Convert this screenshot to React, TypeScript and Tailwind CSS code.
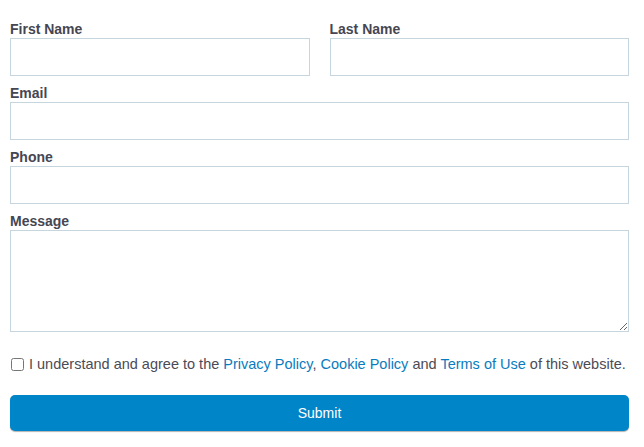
import React from "react";

const labelCls = "block text-[14px] leading-[16px] font-bold text-[#464652] mb-[1px]";
const inputCls = "block w-full h-[38px] border border-[#c5d6de] bg-white outline-none px-2";

export default function App() {
  return (
    <div className="w-[644px] h-[447px] bg-white pl-[10px] pr-[15px] pt-[21px] font-['Liberation_Sans',Arial,sans-serif]">
      <form className="flex flex-col">
        <div className="grid grid-cols-2 gap-x-[20px]">
          <div>
            <label className={labelCls}>First Name</label>
            <input className={inputCls} />
          </div>
          <div>
            <label className={labelCls}>Last Name</label>
            <input className={inputCls} />
          </div>
        </div>
        <div className="mt-[9px]">
          <label className={labelCls}>Email</label>
          <input className={inputCls} />
        </div>
        <div className="mt-[9px]">
          <label className={labelCls}>Phone</label>
          <input className={inputCls} />
        </div>
        <div className="mt-[9px]">
          <label className={labelCls}>Message</label>
          <textarea className="block w-full h-[102px] border border-[#c5d6de] bg-white outline-none p-2" />
        </div>
        <div className="mt-[24px] flex items-center h-[17px] text-[14.5px] text-[#4b4b55]">
          <input type="checkbox" className="w-[13px] h-[13px] ml-[1px] mr-[5px]" />
          <span>
            I understand and agree to the{" "}
            <a className="text-[#0a7bbd]">Privacy Policy</a>,{" "}
            <a className="text-[#0a7bbd]">Cookie Policy</a> and{" "}
            <a className="text-[#0a7bbd]">Terms of Use</a> of this website.
          </span>
        </div>
        <button
          type="button"
          className="mt-[22px] w-full h-[36px] rounded-[5px] bg-[#0085c8] text-white text-[14px] shadow-[0_1px_1px_rgba(0,0,0,0.3)]"
        >
          Submit
        </button>
      </form>
    </div>
  );
}
